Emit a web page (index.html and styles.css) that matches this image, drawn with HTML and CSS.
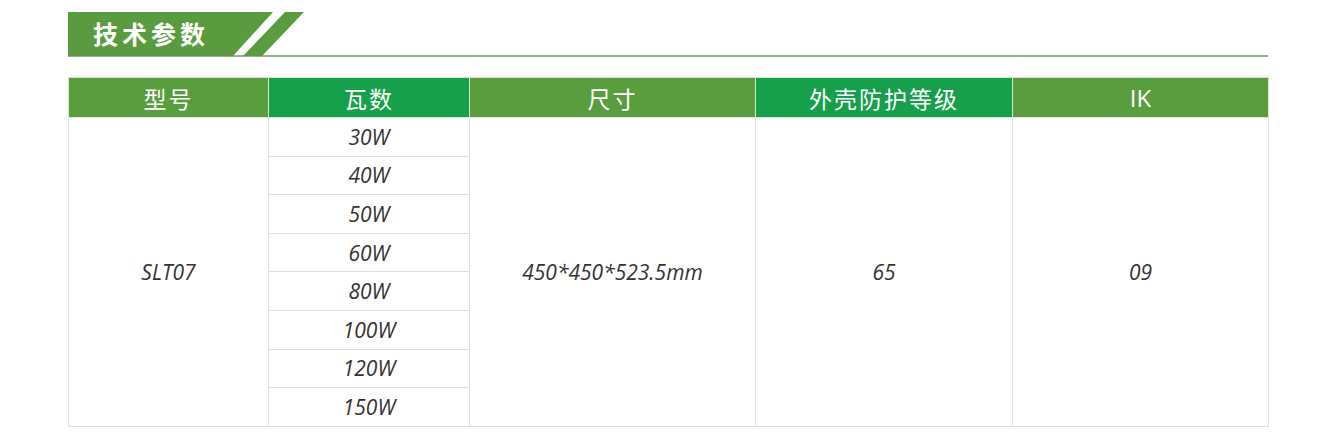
FILE: index.html
```html
<!DOCTYPE html>
<html lang="zh">
<head>
<meta charset="utf-8">
<link rel="stylesheet" href="styles.css">
</head>
<body>
<div class="page">
  <div class="banner">
    <div class="banner-head">
      <svg class="banner-shape" width="240" height="44" viewBox="0 0 240 44">
        <polygon points="0,0 205,0 165,44 0,44" fill="#5a9b3f"/>
        <polygon points="217,0 236,0 194,44 175,44" fill="#5a9b3f"/>
      </svg>
      <span class="banner-title">技术参数</span>
    </div>
    <div class="banner-line"></div>
  </div>
  <table class="spec">
    <colgroup>
      <col class="c1"><col class="c2"><col class="c3"><col class="c4"><col class="c5">
    </colgroup>
    <thead>
      <tr>
        <th class="light">型号</th>
        <th class="dark">瓦数</th>
        <th class="light">尺寸</th>
        <th class="dark">外壳防护等级</th>
        <th class="light ik">IK</th>
      </tr>
    </thead>
    <tbody>
      <tr>
        <td rowspan="8">SLT07</td>
        <td>30W</td>
        <td rowspan="8">450*450*523.5mm</td>
        <td rowspan="8">65</td>
        <td rowspan="8">09</td>
      </tr>
      <tr><td>40W</td></tr>
      <tr><td>50W</td></tr>
      <tr><td>60W</td></tr>
      <tr><td>80W</td></tr>
      <tr><td>100W</td></tr>
      <tr><td>120W</td></tr>
      <tr><td>150W</td></tr>
    </tbody>
  </table>
</div>
</body>
</html>
```
FILE: styles.css
```css
html, body {
  margin: 0;
  padding: 0;
  background: #ffffff;
}

.page {
  padding: 12px 0 0 68px;
  width: 1200px;
}

.banner {
  display: flex;
  flex-direction: column;
}

.banner-head {
  position: relative;
  height: 43px;
}

.banner-shape {
  position: absolute;
  left: 0;
  top: 0;
}

.banner-title {
  position: absolute;
  left: 25px;
  top: 6px;
  font-family: "Noto Sans CJK SC", "Noto Sans", sans-serif;
  font-weight: 700;
  font-size: 25px;
  line-height: 30px;
  letter-spacing: 4px;
  color: #ffffff;
}

.banner-line {
  height: 2px;
  background: #93b285;
}

.spec {
  margin-top: 20px;
  width: 1200px;
  border-collapse: collapse;
  table-layout: fixed;
}

.c1 { width: 200px; }
.c2 { width: 201px; }
.c3 { width: 286px; }
.c4 { width: 257px; }
.c5 { width: 256px; }

.spec th {
  height: 39px;
  padding: 0;
  border: 1px solid #d8e8d0;
  color: #ffffff;
  font-family: "Noto Sans CJK SC", "Noto Sans", sans-serif;
  font-weight: 400;
  font-size: 23px;
  letter-spacing: 2px;
  text-align: center;
  vertical-align: middle;
}

.spec th.ik {
  font-family: "Open Sans", "Noto Sans", sans-serif;
  font-weight: 500;
  letter-spacing: 0;
  font-size: 24px;
}

.spec th.light { background: #5a9d3f; }
.spec th.dark { background: #16a04b; }

.spec td {
  height: 37.6px;
  padding: 0;
  border: 1px solid #dedede;
  color: #333333;
  font-family: "Open Sans", "Liberation Sans", sans-serif;
  font-style: italic;
  font-size: 21px;
  text-align: center;
  vertical-align: middle;
}
```
